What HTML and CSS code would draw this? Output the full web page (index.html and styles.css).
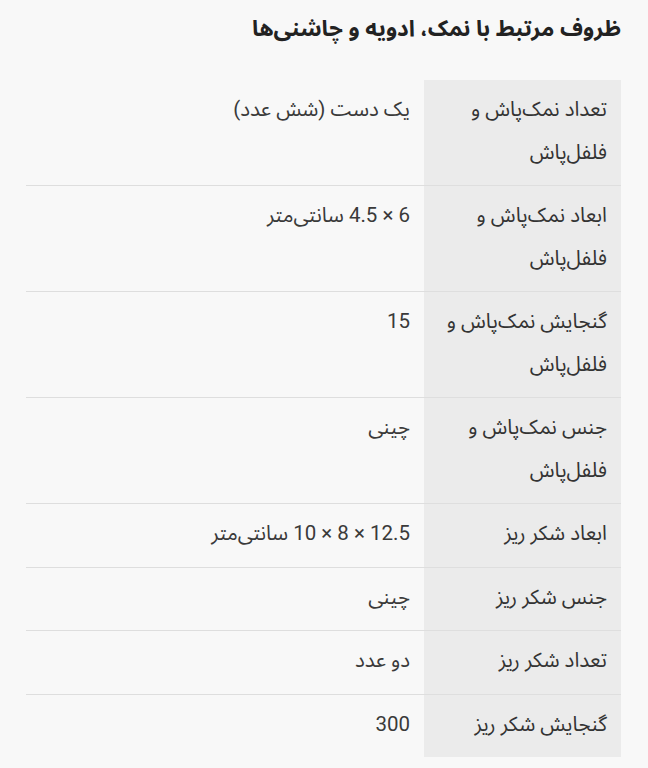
FILE: index.html
```html
<!DOCTYPE html>
<html lang="fa" dir="rtl">
<head>
<meta charset="utf-8">
<link rel="stylesheet" href="styles.css">
</head>
<body>
<div class="page">
  <h2 class="title">ظروف مرتبط با نمک، ادویه و چاشنی‌ها</h2>
  <table class="specs">
    <tbody>
      <tr><th>تعداد نمک‌پاش و فلفل‌پاش</th><td>یک دست (شش عدد)</td></tr>
      <tr><th>ابعاد نمک‌پاش و فلفل‌پاش</th><td>6 × 4.5 سانتی‌متر</td></tr>
      <tr><th>گنجایش نمک‌پاش و فلفل‌پاش</th><td>15</td></tr>
      <tr><th>جنس نمک‌پاش و فلفل‌پاش</th><td>چینی</td></tr>
      <tr><th>ابعاد شکر ریز</th><td>12.5 × 8 × 10 سانتی‌متر</td></tr>
      <tr><th>جنس شکر ریز</th><td>چینی</td></tr>
      <tr><th>تعداد شکر ریز</th><td>دو عدد</td></tr>
      <tr><th>گنجایش شکر ریز</th><td>300</td></tr>
    </tbody>
  </table>
</div>
</body>
</html>
```
FILE: styles.css
```css
html, body {
  margin: 0;
  padding: 0;
  background: #f8f8f8;
}
body {
  font-family: Roboto, "Noto Sans Arabic", "DejaVu Sans", sans-serif;
  color: #3a3a3a;
}
.page {
  padding: 0 27px 0 26px;
}
.title {
  margin: 13px 0 37px;
  font-size: 22.5px;
  line-height: 30px;
  font-weight: 700;
  color: #222;
  text-align: right;
}
.specs {
  width: 100%;
  border-collapse: collapse;
}
.specs tr + tr th,
.specs tr + tr td {
  border-top: 1px solid #dedede;
}
.specs th,
.specs td {
  vertical-align: top;
  text-align: right;
  font-weight: 400;
  font-size: 20.5px;
  line-height: 42.5px;
  padding: 8px 14px 12px;
}
.specs th {
  width: 169px;
  background: #ebebeb;
  color: #333;
}
.specs td {
  color: #3a3a3a;
}
```
